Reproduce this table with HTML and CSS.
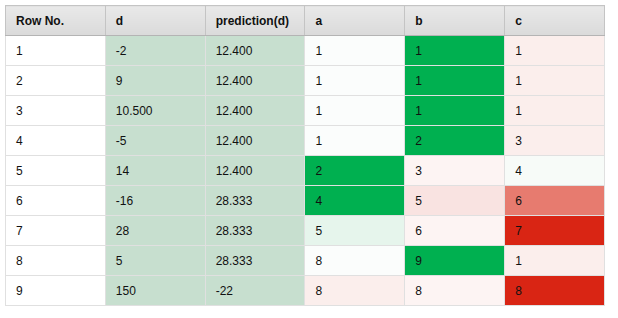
FILE: index.html
```html
<!DOCTYPE html>
<html>
<head>
<meta charset="utf-8">
<link rel="stylesheet" href="styles.css">
</head>
<body>
<div class="wrap">
<table class="grid">
<thead>
<tr><th>Row No.</th><th>d</th><th>prediction(d)</th><th>a</th><th>b</th><th>c</th></tr>
</thead>
<tbody>
<tr><td>1</td><td class="g">-2</td><td class="g">12.400</td><td class="w">1</td><td class="G">1</td><td class="p1">1</td></tr>
<tr><td>2</td><td class="g">9</td><td class="g">12.400</td><td class="w">1</td><td class="G">1</td><td class="p1">1</td></tr>
<tr><td>3</td><td class="g">10.500</td><td class="g">12.400</td><td class="w">1</td><td class="G">1</td><td class="p1">1</td></tr>
<tr><td>4</td><td class="g">-5</td><td class="g">12.400</td><td class="w">1</td><td class="G">2</td><td class="p1">3</td></tr>
<tr><td>5</td><td class="g">14</td><td class="g">12.400</td><td class="G">2</td><td class="p2">3</td><td class="w2">4</td></tr>
<tr><td>6</td><td class="g">-16</td><td class="g">28.333</td><td class="G">4</td><td class="p3">5</td><td class="s">6</td></tr>
<tr><td>7</td><td class="g">28</td><td class="g">28.333</td><td class="lg">5</td><td class="p2">6</td><td class="R">7</td></tr>
<tr><td>8</td><td class="g">5</td><td class="g">28.333</td><td class="w">8</td><td class="G">9</td><td class="p1">1</td></tr>
<tr><td>9</td><td class="g">150</td><td class="g">-22</td><td class="p1">8</td><td class="p2">8</td><td class="R">8</td></tr>
</tbody>
</table>
</div>
</body>
</html>
```
FILE: styles.css
```css
html, body { margin: 0; padding: 0; background: #fff; }
.wrap { padding: 5px; }
.grid {
  border-collapse: collapse;
  width: 600px;
  table-layout: fixed;
  font-family: "Liberation Sans", Arial, sans-serif;
  font-size: 12px;
  color: #111;
}
.grid th, .grid td {
  height: 30px;
  padding: 0 0 0 10px;
  text-align: left;
  vertical-align: middle;
  box-sizing: border-box;
}
.grid th {
  font-weight: bold;
  background: linear-gradient(#e9e9e9, #dadada);
  border: 1px solid #c4c4c4;
  border-bottom-color: #b4b4b4;
}
.grid td {
  border: 1px solid #e0e0e0;
  background: #fff;
}
.grid td.g { background: #c7dfcf; }
.grid td.G { background: #00b050; }
.grid td.w { background: #fbfdfc; }
.grid td.w2 { background: #f7fbf8; }
.grid td.lg { background: #e6f5ec; }
.grid td.p1 { background: #fbeeec; }
.grid td.p2 { background: #fdf4f3; }
.grid td.p3 { background: #f9e3e1; }
.grid td.s { background: #e77b6f; }
.grid td.R { background: #d92514; }
```
